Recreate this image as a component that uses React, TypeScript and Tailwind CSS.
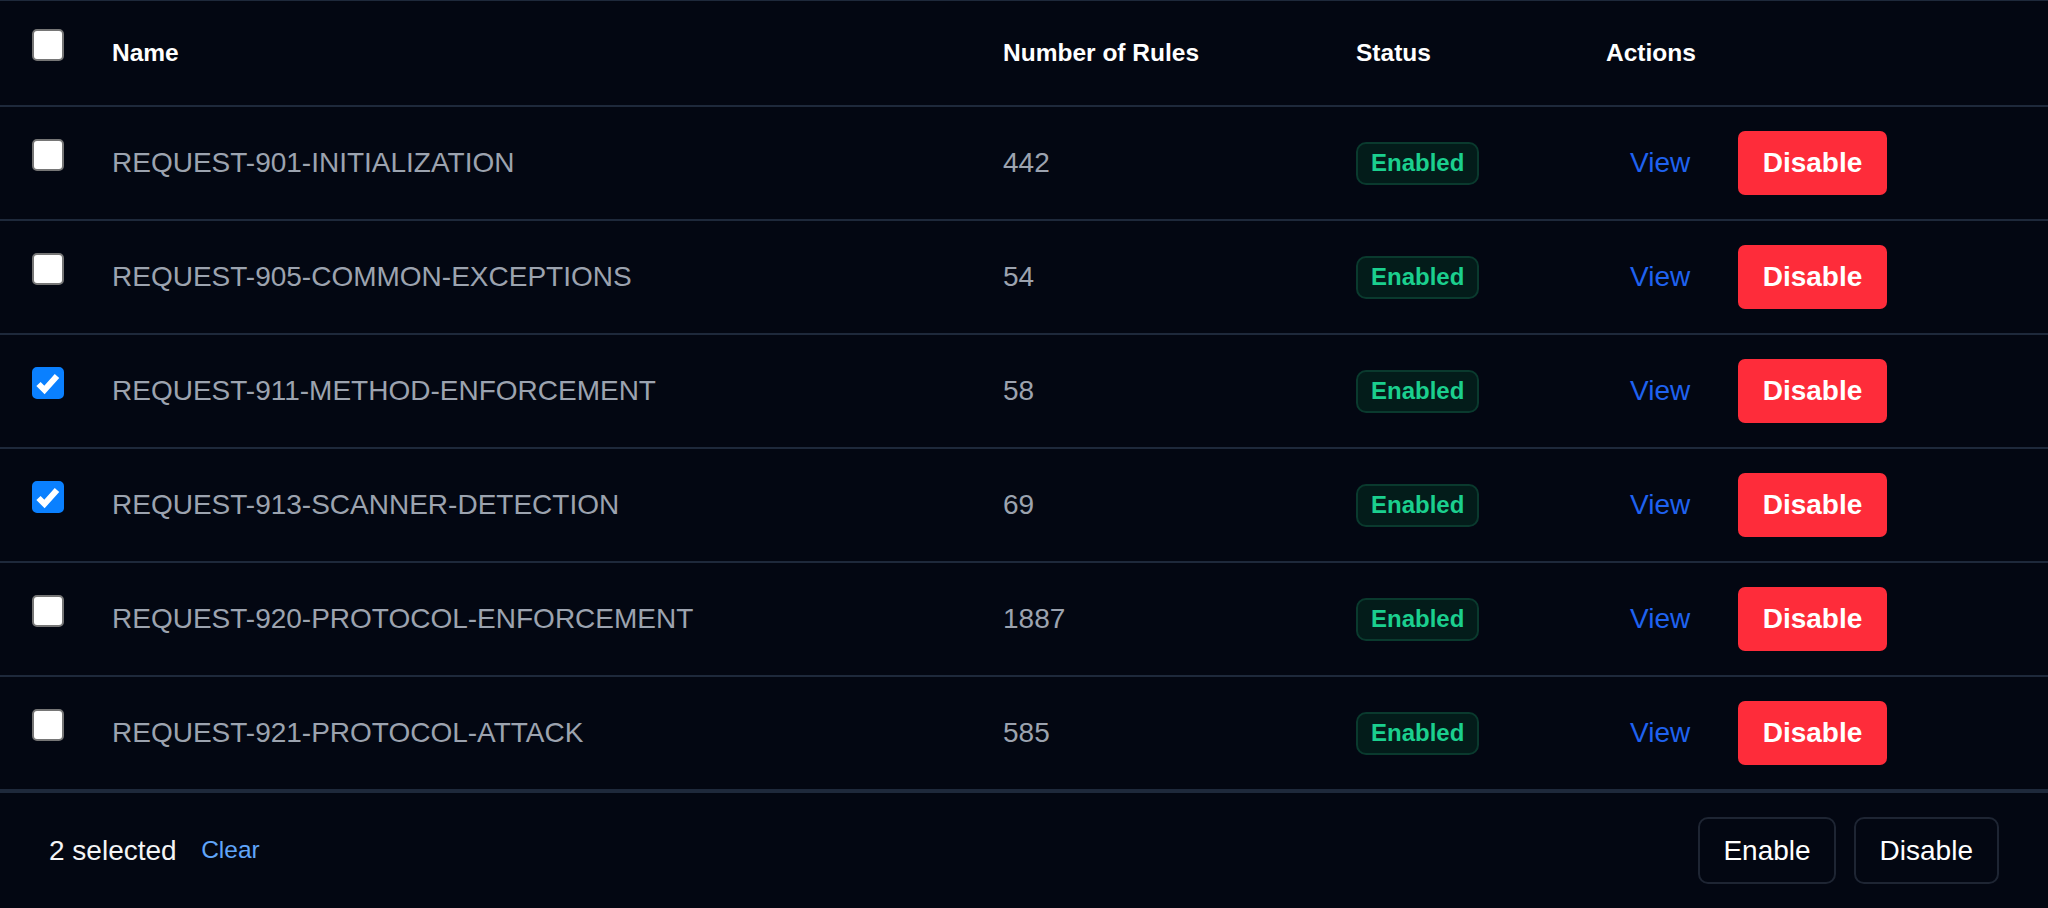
import { useState } from 'react'

const rulesets = [
  { name: 'REQUEST-901-INITIALIZATION', rules: 442 },
  { name: 'REQUEST-905-COMMON-EXCEPTIONS', rules: 54 },
  { name: 'REQUEST-911-METHOD-ENFORCEMENT', rules: 58 },
  { name: 'REQUEST-913-SCANNER-DETECTION', rules: 69 },
  { name: 'REQUEST-920-PROTOCOL-ENFORCEMENT', rules: 1887 },
  { name: 'REQUEST-921-PROTOCOL-ATTACK', rules: 585 },
]

const cols = 'grid grid-cols-[84px_891px_353px_250px_1fr]'

function Checkbox({ checked, onChange }: { checked: boolean; onChange: () => void }) {
  return (
    <label className="relative w-8 h-8 mb-4 cursor-pointer">
      <input
        type="checkbox"
        checked={checked}
        onChange={onChange}
        className="peer appearance-none block w-8 h-8 rounded-[5px] border-2 border-[#767676] bg-white checked:border-[#0a80ff] checked:bg-[#0a80ff]"
      />
      <svg
        viewBox="0 0 32 32"
        className="absolute inset-0 w-8 h-8 hidden peer-checked:block pointer-events-none"
      >
        <path d="M6.5 17 L12.5 23 L25 9" fill="none" stroke="white" strokeWidth="6" />
      </svg>
    </label>
  )
}

export default function App() {
  const [selected, setSelected] = useState<string[]>([
    'REQUEST-911-METHOD-ENFORCEMENT',
    'REQUEST-913-SCANNER-DETECTION',
  ])

  const toggle = (name: string) =>
    setSelected((s) => (s.includes(name) ? s.filter((n) => n !== name) : [...s, name]))

  const allChecked = selected.length === rulesets.length

  return (
    <div className="min-h-screen bg-[#030712] font-['Liberation_Sans',Arial,sans-serif] border-t border-[#1e293b]">
      {/* header */}
      <div className={`${cols} h-[106px] border-b-2 border-[#1e293b] text-[24.5px] font-bold text-white`}>
        <div className="flex items-center pl-[32px]">
          <Checkbox
            checked={allChecked}
            onChange={() => setSelected(allChecked ? [] : rulesets.map((r) => r.name))}
          />
        </div>
        <div className="flex items-center pl-[28px]">Name</div>
        <div className="flex items-center pl-[28px]">Number of Rules</div>
        <div className="flex items-center pl-[28px]">Status</div>
        <div className="flex items-center pl-[28px]">Actions</div>
      </div>

      {rulesets.map((r) => (
        <div key={r.name} className={`${cols} h-[114px] border-b-2 border-[#1e293b] text-[28px] text-[#9ca3af]`}>
          <div className="flex items-center pl-[32px]">
            <Checkbox checked={selected.includes(r.name)} onChange={() => toggle(r.name)} />
          </div>
          <div className="flex items-center pl-[28px]">{r.name}</div>
          <div className="flex items-center pl-[28px]">{r.rules}</div>
          <div className="flex items-center pl-[28px]">
            <span className="h-[43px] px-[13px] flex items-center rounded-[10px] border-2 border-[#0a3a2e] bg-[#031c1a] text-[24px] font-bold text-[#1bcf8e]">
              Enabled
            </span>
          </div>
          <div className="flex items-center pl-[28px] gap-[24px]">
            <button className="px-[24px] text-[28px] text-[#1f62f0]">View</button>
            <button className="h-[64px] px-[24.5px] rounded-[7px] bg-[#fe2c3a] text-[28px] font-bold text-white">
              Disable
            </button>
          </div>
        </div>
      ))}

      {/* selection bar */}
      <div className="h-[117px] border-t-2 border-[#1e293b] flex items-center justify-between px-[49px]">
        <div className="flex items-center gap-[24.5px]">
          <span className="text-[28px] text-[#f3f4f6]">{selected.length} selected</span>
          <button className="text-[24.5px] text-[#60a5fa]" onClick={() => setSelected([])}>
            Clear
          </button>
        </div>
        <div className="flex items-center gap-[17.5px]">
          <button className="h-[67px] px-[23.5px] rounded-[10px] border-2 border-[#1e2533] text-[28px] text-white">
            Enable
          </button>
          <button className="h-[67px] px-[24px] rounded-[10px] border-2 border-[#1e2533] text-[28px] text-white">
            Disable
          </button>
        </div>
      </div>
    </div>
  )
}
